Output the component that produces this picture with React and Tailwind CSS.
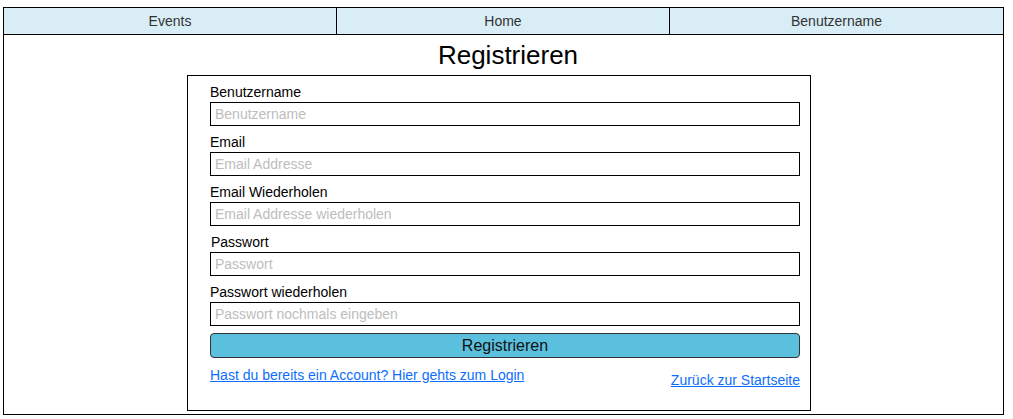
const FIELDS = [
  { label: "Benutzername", placeholder: "Benutzername", type: "text" },
  { label: "Email", placeholder: "Email Addresse", type: "email" },
  { label: "Email Wiederholen", placeholder: "Email Addresse wiederholen", type: "email" },
  { label: "Passwort", placeholder: "Passwort", type: "password", nudge: true },
  { label: "Passwort wiederholen", placeholder: "Passwort nochmals eingeben", type: "password" },
];

export default function App() {
  return (
    <div className="pt-[7px] pl-[3px] font-['Liberation_Sans',Arial,sans-serif] text-[#222]">
      <div className="w-[1001px] h-[408px] border border-black flex flex-col">
        {/* top nav */}
        <nav className="h-[27px] grid grid-cols-3 bg-[#d9edf7] border-b border-black text-[14px] text-[#333]">
          <a className="flex items-center justify-center border-r border-black">Events</a>
          <a className="flex items-center justify-center border-r border-black">Home</a>
          <a className="flex items-center justify-center">Benutzername</a>
        </nav>

        <h1 className="h-[40px] flex items-center justify-center text-[26px] text-black leading-none pl-[9px]">
          Registrieren
        </h1>

        <form className="ml-[183px] w-[624px] h-[336px] border border-black pl-[22px] pr-[10px] pt-[8px]">
          {FIELDS.map((f) => (
            <div key={f.label} className="h-[50px]">
              <label className={`block h-[18px] text-[14px] leading-[16px] text-black ${f.nudge ? "pl-px" : ""}`}>
                {f.label}
              </label>
              <input
                type={f.type}
                placeholder={f.placeholder}
                className="block w-full h-[24px] border border-black px-[4px] text-[14px] placeholder:text-[#bdbdbd] outline-none"
              />
            </div>
          ))}
          <button
            type="button"
            className="block w-full h-[25px] -mt-[1px] rounded-[4px] border border-[#333] bg-[#5bc0de] text-[16px] text-[#111]"
          >
            Registrieren
          </button>
          <div className="flex justify-between items-start mt-[7px] text-[14px]">
            <a href="#" className="text-[#0d6efd] underline">Hast du bereits ein Account? Hier gehts zum Login</a>
            <a href="#" className="text-[#0d6efd] underline mt-[5px]">Zurück zur Startseite</a>
          </div>
        </form>
      </div>
    </div>
  );
}
